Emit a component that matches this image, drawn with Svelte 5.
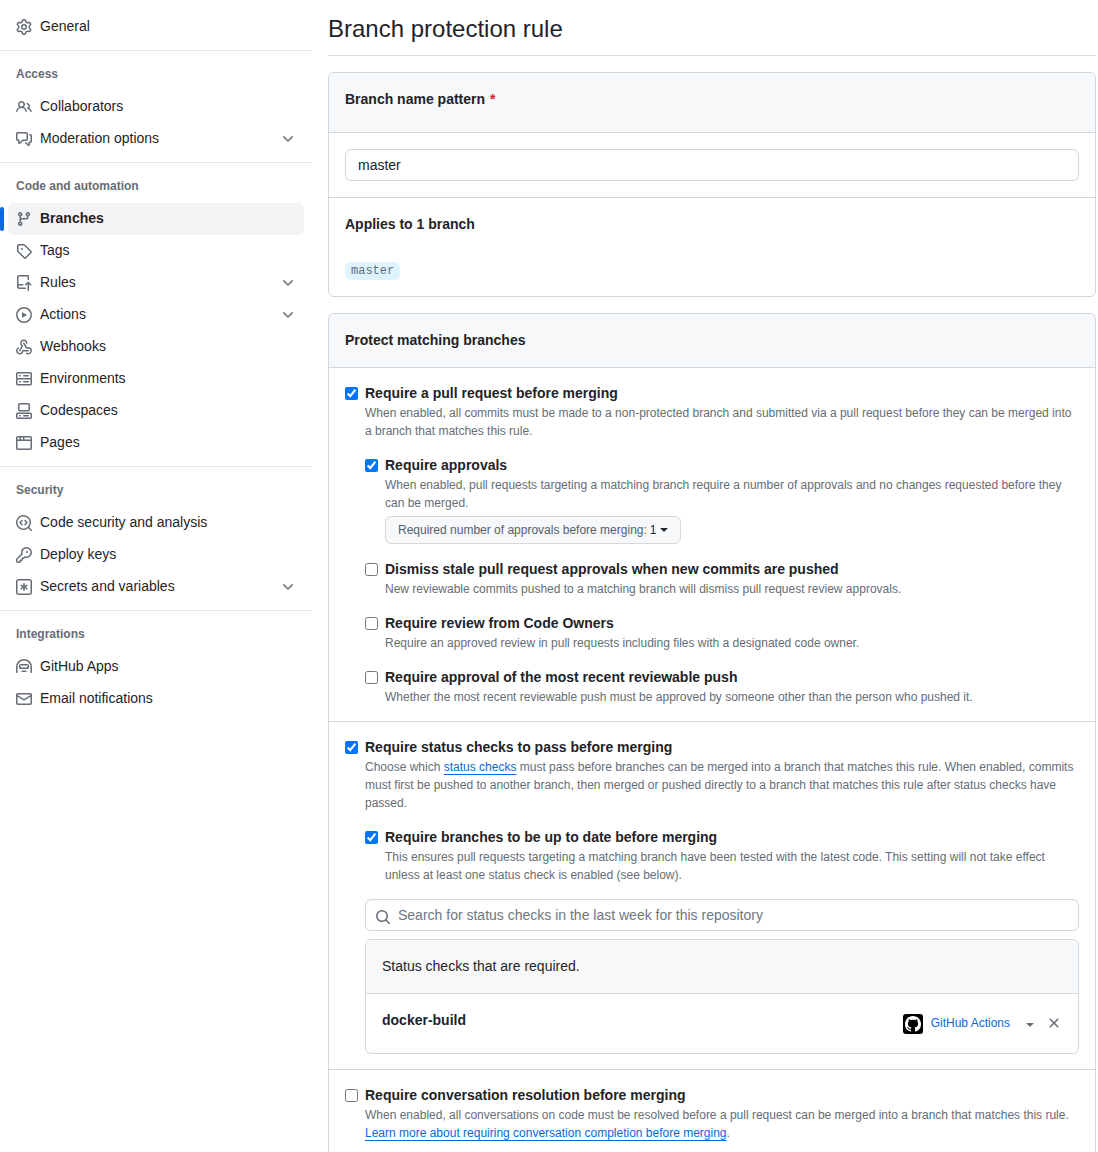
<script lang="ts">
	const icons: Record<string, string> = {
		gear: 'M8 0a8.2 8.2 0 0 1 .701.031C9.444.095 9.99.645 10.16 1.29l.288 1.107c.018.066.079.158.212.224.231.114.454.243.668.386.123.082.233.09.299.071l1.103-.303c.644-.176 1.392.021 1.82.63.27.385.506.792.704 1.218.315.675.111 1.422-.364 1.891l-.814.806c-.049.048-.098.147-.088.294.016.257.016.515 0 .772-.01.147.038.246.088.294l.814.806c.475.469.679 1.216.364 1.891a7.977 7.977 0 0 1-.704 1.217c-.428.61-1.176.807-1.82.63l-1.102-.302c-.067-.019-.177-.011-.3.071a5.909 5.909 0 0 1-.668.386c-.133.066-.194.158-.211.224l-.29 1.106c-.168.646-.715 1.196-1.458 1.26a8.006 8.006 0 0 1-1.402 0c-.743-.064-1.289-.614-1.458-1.26l-.289-1.106c-.018-.066-.079-.158-.212-.224a5.738 5.738 0 0 1-.668-.386c-.123-.082-.233-.09-.299-.071l-1.103.303c-.644.176-1.392-.021-1.82-.63a8.12 8.12 0 0 1-.704-1.218c-.315-.675-.111-1.422.363-1.891l.815-.806c.05-.048.098-.147.088-.294a6.214 6.214 0 0 1 0-.772c.01-.147-.038-.246-.088-.294l-.815-.806C.635 6.045.431 5.298.746 4.623a7.92 7.92 0 0 1 .704-1.217c.428-.61 1.176-.807 1.82-.63l1.102.302c.067.019.177.011.3-.071.214-.143.437-.272.668-.386.133-.066.194-.158.211-.224l.29-1.106C6.009.645 6.556.095 7.299.03 7.53.01 7.764 0 8 0Zm-.571 1.525c-.036.003-.108.036-.137.146l-.289 1.105c-.147.561-.549.967-.998 1.189-.173.086-.34.183-.5.29-.417.278-.97.423-1.529.27l-1.103-.303c-.109-.03-.175.016-.195.045-.22.312-.412.644-.573.99-.014.031-.021.11.059.19l.815.806c.411.406.562.957.53 1.456a4.709 4.709 0 0 0 0 .582c.032.499-.119 1.05-.53 1.456l-.815.806c-.081.08-.073.159-.059.19.162.346.353.677.573.989.02.03.085.076.195.046l1.102-.303c.56-.153 1.113-.008 1.53.27.161.107.328.204.501.29.447.222.85.629.997 1.189l.289 1.105c.029.109.101.143.137.146a6.6 6.6 0 0 0 1.142 0c.036-.003.108-.036.137-.146l.289-1.105c.147-.561.549-.967.998-1.189.173-.086.34-.183.5-.29.417-.278.97-.423 1.529-.27l1.103.303c.109.029.175-.016.195-.045.22-.313.411-.644.573-.99.014-.031.021-.11-.059-.19l-.815-.806c-.411-.406-.562-.957-.53-1.456a4.709 4.709 0 0 0 0-.582c-.032-.499.119-1.05.53-1.456l.815-.806c.081-.08.073-.159.059-.19a6.464 6.464 0 0 0-.573-.989c-.02-.03-.085-.076-.195-.046l-1.102.303c-.56.153-1.113.008-1.53-.27a4.44 4.44 0 0 0-.501-.29c-.447-.222-.85-.629-.997-1.189l-.289-1.105c-.029-.11-.101-.143-.137-.146a6.6 6.6 0 0 0-1.142 0ZM11 8a3 3 0 1 1-6 0 3 3 0 0 1 6 0ZM9.5 8a1.5 1.5 0 1 0-3.001.001A1.5 1.5 0 0 0 9.5 8Z',
		people: 'M2 5.5a3.5 3.5 0 1 1 5.898 2.549 5.508 5.508 0 0 1 3.034 4.084.75.75 0 1 1-1.482.235 4 4 0 0 0-7.9 0 .75.75 0 0 1-1.482-.236A5.507 5.507 0 0 1 3.102 8.05 3.493 3.493 0 0 1 2 5.5ZM11 4a3.001 3.001 0 0 1 2.22 5.018 5.01 5.01 0 0 1 2.56 3.012.749.749 0 0 1-.885.954.752.752 0 0 1-.549-.514 3.507 3.507 0 0 0-2.522-2.372.75.75 0 0 1-.574-.73v-.352a.75.75 0 0 1 .416-.672A1.5 1.5 0 0 0 11 5.5.75.75 0 0 1 11 4Zm-5.5-.5a2 2 0 1 0-.001 3.999A2 2 0 0 0 5.5 3.5Z',
		discussion: 'M1.75 1h8.5c.966 0 1.75.784 1.75 1.75v5.5A1.75 1.75 0 0 1 10.25 10H7.061l-2.574 2.573A1.458 1.458 0 0 1 2 11.543V10h-.25A1.75 1.75 0 0 1 0 8.25v-5.5C0 1.784.784 1 1.75 1ZM1.5 2.75v5.5c0 .138.112.25.25.25h1a.75.75 0 0 1 .75.75v2.19l2.72-2.72a.749.749 0 0 1 .53-.22h3.5a.25.25 0 0 0 .25-.25v-5.5a.25.25 0 0 0-.25-.25h-8.5a.25.25 0 0 0-.25.25Zm13 2a.25.25 0 0 0-.25-.25h-.5a.75.75 0 0 1 0-1.5h.5c.966 0 1.75.784 1.75 1.75v5.5A1.75 1.75 0 0 1 14.25 12H14v1.543a1.458 1.458 0 0 1-2.487 1.03L9.22 12.28a.749.749 0 0 1 .326-1.275.749.749 0 0 1 .734.215l2.22 2.22v-2.19a.75.75 0 0 1 .75-.75h1a.25.25 0 0 0 .25-.25Z',
		branch: 'M9.5 3.25a2.25 2.25 0 1 1 3 2.122V6A2.5 2.5 0 0 1 10 8.5H6a1 1 0 0 0-1 1v1.128a2.251 2.251 0 1 1-1.5 0V5.372a2.25 2.25 0 1 1 1.5 0v1.836A2.493 2.493 0 0 1 6 7h4a1 1 0 0 0 1-1v-.628A2.25 2.25 0 0 1 9.5 3.25Zm-6 0a.75.75 0 1 0 1.5 0 .75.75 0 0 0-1.5 0Zm8.25-.75a.75.75 0 1 0 0 1.5.75.75 0 0 0 0-1.5ZM4.25 12a.75.75 0 1 0 0 1.5.75.75 0 0 0 0-1.5Z',
		tag: 'M1 7.775V2.75C1 1.784 1.784 1 2.75 1h5.025c.464 0 .91.184 1.238.513l6.25 6.25a1.75 1.75 0 0 1 0 2.474l-5.026 5.026a1.75 1.75 0 0 1-2.474 0l-6.25-6.25A1.752 1.752 0 0 1 1 7.775Zm1.5 0c0 .066.026.13.073.177l6.25 6.25a.25.25 0 0 0 .354 0l5.025-5.025a.25.25 0 0 0 0-.354l-6.25-6.25a.25.25 0 0 0-.177-.073H2.75a.25.25 0 0 0-.25.25ZM6 5a1 1 0 1 1 0 2 1 1 0 0 1 0-2Z',
		push: 'M1 2.5A2.5 2.5 0 0 1 3.5 0h8.75a.75.75 0 0 1 .75.75v3.5a.75.75 0 0 1-1.5 0V1.5h-8a1 1 0 0 0-1 1v6.708A2.493 2.493 0 0 1 3.5 9h3.25a.75.75 0 0 1 0 1.5H3.5a1 1 0 0 0 0 2h5.75a.75.75 0 0 1 0 1.5H3.5A2.5 2.5 0 0 1 1 11.5Zm13.23 7.79h-.001l-1.224-1.224v6.184a.75.75 0 0 1-1.5 0V9.066L10.28 10.29a.75.75 0 0 1-1.06-1.061l2.505-2.504a.75.75 0 0 1 1.06 0L15.29 9.23a.751.751 0 0 1-.018 1.042.751.751 0 0 1-1.042.018Z',
		play: 'M8 0a8 8 0 1 1 0 16A8 8 0 0 1 8 0ZM1.5 8a6.5 6.5 0 1 0 13 0 6.5 6.5 0 0 0-13 0Zm4.879-2.773 4.264 2.559a.25.25 0 0 1 0 .428l-4.264 2.559A.25.25 0 0 1 6 10.559V5.442a.25.25 0 0 1 .379-.215Z',
		webhook: 'M5.5 4.25a2.25 2.25 0 0 1 4.5 0 .75.75 0 0 0 1.5 0 3.75 3.75 0 1 0-6.14 2.889l-2.272 4.258a.75.75 0 0 0 1.324.706L7 7.25a.75.75 0 0 0-.309-1.015A2.25 2.25 0 0 1 5.5 4.25ZM7.364 3.607a.75.75 0 0 1 1.03.257l2.608 4.349a3.75 3.75 0 1 1-.628 6.785.75.75 0 0 1 .752-1.299 2.25 2.25 0 1 0-.033-3.88.75.75 0 0 1-1.03-.256L7.107 4.636a.75.75 0 0 1 .257-1.03ZM2.9 8.776A.75.75 0 0 1 2.625 9.8 2.25 2.25 0 1 0 6 11.75a.75.75 0 0 1 .75-.751h5.5a.75.75 0 0 1 0 1.5H7.425a3.751 3.751 0 1 1-5.55-3.998.75.75 0 0 1 1.024.274Z',
		server: 'M1.75 1h12.5c.966 0 1.75.784 1.75 1.75v4c0 .372-.116.717-.314 1 .198.283.314.628.314 1v4a1.75 1.75 0 0 1-1.75 1.75H1.75A1.75 1.75 0 0 1 0 12.75v-4c0-.358.109-.707.314-1a1.739 1.739 0 0 1-.314-1v-4C0 1.784.784 1 1.75 1ZM1.5 2.75v4c0 .138.112.25.25.25h12.5a.25.25 0 0 0 .25-.25v-4a.25.25 0 0 0-.25-.25H1.75a.25.25 0 0 0-.25.25Zm.25 5.75a.25.25 0 0 0-.25.25v4c0 .138.112.25.25.25h12.5a.25.25 0 0 0 .25-.25v-4a.25.25 0 0 0-.25-.25ZM7 4.75A.75.75 0 0 1 7.75 4h4.5a.75.75 0 0 1 0 1.5h-4.5A.75.75 0 0 1 7 4.75ZM7.75 10h4.5a.75.75 0 0 1 0 1.5h-4.5a.75.75 0 0 1 0-1.5ZM3 4.75A.75.75 0 0 1 3.75 4h.5a.75.75 0 0 1 0 1.5h-.5A.75.75 0 0 1 3 4.75ZM3.75 10h.5a.75.75 0 0 1 0 1.5h-.5a.75.75 0 0 1 0-1.5Z',
		codespaces: 'M0 11.25c0-.966.784-1.75 1.75-1.75h12.5c.966 0 1.75.784 1.75 1.75v3A1.75 1.75 0 0 1 14.25 16H1.75A1.75 1.75 0 0 1 0 14.25Zm2-9.5C2 .784 2.784 0 3.75 0h8.5C13.216 0 14 .784 14 1.75v5a1.75 1.75 0 0 1-1.75 1.75h-8.5A1.75 1.75 0 0 1 2 6.75Zm1.75-.25a.25.25 0 0 0-.25.25v5c0 .138.112.25.25.25h8.5a.25.25 0 0 0 .25-.25v-5a.25.25 0 0 0-.25-.25Zm-2 9.5a.25.25 0 0 0-.25.25v3c0 .138.112.25.25.25h12.5a.25.25 0 0 0 .25-.25v-3a.25.25 0 0 0-.25-.25ZM7 12.75a.75.75 0 0 1 .75-.75h4.5a.75.75 0 0 1 0 1.5h-4.5a.75.75 0 0 1-.75-.75Zm-4 0a.75.75 0 0 1 .75-.75h.5a.75.75 0 0 1 0 1.5h-.5a.75.75 0 0 1-.75-.75Z',
		browser: 'M0 2.75C0 1.784.784 1 1.75 1h12.5c.966 0 1.75.784 1.75 1.75v10.5A1.75 1.75 0 0 1 14.25 15H1.75A1.75 1.75 0 0 1 0 13.25ZM14.5 6h-13v7.25c0 .138.112.25.25.25h12.5a.25.25 0 0 0 .25-.25Zm-6-3.5v2h6V2.75a.25.25 0 0 0-.25-.25ZM5 2.5v2h2v-2Zm-3.25 0a.25.25 0 0 0-.25.25V4.5h2v-2Z',
		codescan: 'M8.47 4.97a.75.75 0 0 0 0 1.06L9.94 7.5 8.47 8.97a.75.75 0 1 0 1.06 1.06l2-2a.75.75 0 0 0 0-1.06l-2-2a.75.75 0 0 0-1.06 0ZM6.53 6.03a.75.75 0 0 0-1.06-1.06l-2 2a.75.75 0 0 0 0 1.06l2 2a.75.75 0 1 0 1.06-1.06L5.06 7.5l1.47-1.47ZM12.246 13.307a7.501 7.501 0 1 1 1.06-1.06l2.474 2.473a.749.749 0 0 1-.326 1.275.749.749 0 0 1-.734-.215ZM1.5 7.5a6.002 6.002 0 0 0 3.608 5.504 6.002 6.002 0 0 0 6.486-1.117.748.748 0 0 1 .292-.293A6 6 0 1 0 1.5 7.5Z',
		key: 'M10.5 0a5.499 5.499 0 1 1-1.288 10.848l-.932.932a.749.749 0 0 1-.53.22H7v.75a.749.749 0 0 1-.22.53l-.5.5a.749.749 0 0 1-.53.22H5v.75a.749.749 0 0 1-.22.53l-.5.5a.749.749 0 0 1-.53.22h-2A1.75 1.75 0 0 1 0 14.25v-2c0-.199.079-.389.22-.53l4.932-4.932A5.5 5.5 0 0 1 10.5 0Zm-4 5.5c-.001.431.069.86.205 1.269a.75.75 0 0 1-.181.768L1.5 12.56v1.69c0 .138.112.25.25.25h1.69l.06-.06v-1.19a.75.75 0 0 1 .75-.75h1.19l.06-.06v-1.19a.75.75 0 0 1 .75-.75h1.19l1.023-1.025a.75.75 0 0 1 .768-.18A4 4 0 1 0 6.5 5.5ZM11 6a1 1 0 1 1 0-2 1 1 0 0 1 0 2Z',
		asterisk: 'M0 2.75A2.75 2.75 0 0 1 2.75 0h10.5A2.75 2.75 0 0 1 16 2.75v10.5A2.75 2.75 0 0 1 13.25 16H2.75A2.75 2.75 0 0 1 0 13.25ZM2.75 1.5c-.69 0-1.25.56-1.25 1.25v10.5c0 .69.56 1.25 1.25 1.25h10.5c.69 0 1.25-.56 1.25-1.25V2.75c0-.69-.56-1.25-1.25-1.25ZM8 4a.75.75 0 0 1 .75.75V6.7l1.69-.975a.75.75 0 0 1 .75 1.3L9.5 8l1.69.976a.75.75 0 0 1-.75 1.298L8.75 9.3v1.951a.75.75 0 0 1-1.5 0V9.299l-1.69.976a.75.75 0 0 1-.75-1.3L6.5 8l-1.69-.975a.75.75 0 0 1 .75-1.3l1.69.976V4.75A.75.75 0 0 1 8 4Z',
		hubot: 'M0 8a8 8 0 1 1 16 0v5.25a.75.75 0 0 1-1.5 0V8a6.5 6.5 0 1 0-13 0v5.25a.75.75 0 0 1-1.5 0Zm5.5 4.25a.75.75 0 0 1 .75-.75h3.5a.75.75 0 0 1 0 1.5h-3.5a.75.75 0 0 1-.75-.75ZM3 6.75C3 5.784 3.784 5 4.75 5h6.5c.966 0 1.75.784 1.75 1.75v1.5A1.75 1.75 0 0 1 11.25 10h-6.5A1.75 1.75 0 0 1 3 8.25Zm1.47-.53a.75.75 0 0 1 1.06 0l.97.97.97-.97a.75.75 0 0 1 1.06 0l.97.97.97-.97a.75.75 0 1 1 1.06 1.06l-1.5 1.5a.75.75 0 0 1-1.06 0L8 7.81l-.97.97a.75.75 0 0 1-1.06 0l-1.5-1.5a.75.75 0 0 1 0-1.06Z',
		mail: 'M1.75 2h12.5c.966 0 1.75.784 1.75 1.75v8.5A1.75 1.75 0 0 1 14.25 14H1.75A1.75 1.75 0 0 1 0 12.25v-8.5C0 2.784.784 2 1.75 2ZM1.5 12.251c0 .138.112.25.25.25h12.5a.25.25 0 0 0 .25-.25V5.809L8.38 9.397a.75.75 0 0 1-.76 0L1.5 5.809v6.442Zm13-8.181v-.32a.25.25 0 0 0-.25-.25H1.75a.25.25 0 0 0-.25.25v.32L8 7.88Z',
		chevron: 'M12.78 5.22a.749.749 0 0 1 0 1.06l-4.25 4.25a.749.749 0 0 1-1.06 0L3.22 6.28a.749.749 0 1 1 1.06-1.06L8 8.939l3.72-3.719a.749.749 0 0 1 1.06 0Z',
		search: 'M10.68 11.74a6 6 0 0 1-7.922-8.982 6 6 0 0 1 8.982 7.922l3.04 3.04a.749.749 0 0 1-.326 1.275.749.749 0 0 1-.734-.215ZM11.5 7a4.499 4.499 0 1 0-8.997 0A4.499 4.499 0 0 0 11.5 7Z',
		close: 'M3.72 3.72a.75.75 0 0 1 1.06 0L8 6.94l3.22-3.22a.749.749 0 0 1 1.275.326.749.749 0 0 1-.215.734L9.06 8l3.22 3.22a.749.749 0 0 1-.326 1.275.749.749 0 0 1-.734-.215L8 9.06l-3.22 3.22a.751.751 0 0 1-1.042-.018.751.751 0 0 1-.018-1.042L6.94 8 3.72 4.78a.75.75 0 0 1 0-1.06Z',
		triangle: 'm4.427 7.427 3.396 3.396a.25.25 0 0 0 .354 0l3.396-3.396A.25.25 0 0 0 11.396 7H4.604a.25.25 0 0 0-.177.427Z',
		mark: 'M8 0c4.42 0 8 3.58 8 8a8.013 8.013 0 0 1-5.45 7.59c-.4.08-.55-.17-.55-.38 0-.27.01-1.13.01-2.2 0-.75-.25-1.23-.54-1.48 1.78-.2 3.65-.88 3.65-3.95 0-.88-.31-1.59-.82-2.15.08-.2.36-1.02-.08-2.12 0 0-.67-.22-2.2.82-.64-.18-1.32-.27-2-.27-.68 0-1.36.09-2 .27-1.53-1.03-2.2-.82-2.2-.82-.44 1.1-.16 1.92-.08 2.12-.51.56-.82 1.28-.82 2.15 0 3.06 1.86 3.75 3.64 3.95-.23.2-.44.55-.51 1.07-.46.21-1.61.55-2.33-.66-.15-.24-.6-.83-1.23-.82-.67.01-.27.38.01.53.34.19.73.9.82 1.13.16.45.68 1.31 2.69.94 0 .67.01 1.3.01 1.49 0 .21-.15.45-.55.38A7.995 7.995 0 0 1 0 8c0-4.42 3.58-8 8-8Z'
	};

	type NavItem = { label: string; icon: string; expandable?: boolean };

	const groups: { title: string; items: NavItem[] }[] = [
		{ title: '', items: [{ label: 'General', icon: 'gear' }] },
		{
			title: 'Access',
			items: [
				{ label: 'Collaborators', icon: 'people' },
				{ label: 'Moderation options', icon: 'discussion', expandable: true }
			]
		},
		{
			title: 'Code and automation',
			items: [
				{ label: 'Branches', icon: 'branch' },
				{ label: 'Tags', icon: 'tag' },
				{ label: 'Rules', icon: 'push', expandable: true },
				{ label: 'Actions', icon: 'play', expandable: true },
				{ label: 'Webhooks', icon: 'webhook' },
				{ label: 'Environments', icon: 'server' },
				{ label: 'Codespaces', icon: 'codespaces' },
				{ label: 'Pages', icon: 'browser' }
			]
		},
		{
			title: 'Security',
			items: [
				{ label: 'Code security and analysis', icon: 'codescan' },
				{ label: 'Deploy keys', icon: 'key' },
				{ label: 'Secrets and variables', icon: 'asterisk', expandable: true }
			]
		},
		{
			title: 'Integrations',
			items: [
				{ label: 'GitHub Apps', icon: 'hubot' },
				{ label: 'Email notifications', icon: 'mail' }
			]
		}
	];

	let current = $state('Branches');
	let pattern = $state('master');
	let query = $state('');
	let checks = $state(['docker-build']);

	let rules = $state({
		pullRequest: true,
		approvals: true,
		dismissStale: false,
		codeOwners: false,
		recentPush: false,
		statusChecks: true,
		upToDate: true,
		conversation: false
	});

	function removeCheck(name: string) {
		checks = checks.filter((c) => c !== name);
	}
</script>

{#snippet icon(name: string)}
	<svg class="icon" viewBox="0 0 16 16" width="16" height="16" aria-hidden="true">
		<path fill-rule={name === 'hubot' ? 'evenodd' : 'nonzero'} d={icons[name]} />
	</svg>
{/snippet}

<div class="page">
	<nav class="sidebar" aria-label="Settings">
		{#each groups as group}
			<div class="group">
				{#if group.title}
					<h3>{group.title}</h3>
				{/if}
				<ul>
					{#each group.items as item}
						<li class:current={item.label === current}>
							{#if item.expandable}
								<button type="button" class="nav-item">
									{@render icon(item.icon)}
									<span>{item.label}</span>
									{@render icon('chevron')}
								</button>
							{:else}
								<a
									class="nav-item"
									href="#{item.icon}"
									aria-current={item.label === current ? 'page' : undefined}
									onclick={() => (current = item.label)}
								>
									{@render icon(item.icon)}
									<span>{item.label}</span>
								</a>
							{/if}
						</li>
					{/each}
				</ul>
			</div>
		{/each}
	</nav>

	<main>
		<h1>Branch protection rule</h1>

		<section class="box">
			<div class="box-header tall">
				<label for="pattern">Branch name pattern <span class="required">*</span></label>
			</div>
			<div class="box-row">
				<input id="pattern" class="field" type="text" bind:value={pattern} />
			</div>
			<div class="box-row applies">
				<h2>Applies to 1 branch</h2>
				<code>master</code>
			</div>
		</section>

		<section class="box rules">
			<div class="box-header">
				<h2>Protect matching branches</h2>
			</div>

			<div class="rule-row">
				<div class="check">
					<input id="pull-request" type="checkbox" bind:checked={rules.pullRequest} />
					<label for="pull-request">Require a pull request before merging</label>
					<p>When enabled, all commits must be made to a non-protected branch and submitted via a pull request before they can be merged into a branch that matches this rule.</p>
				</div>
				<div class="nested">
					<div class="check">
						<input id="approvals" type="checkbox" bind:checked={rules.approvals} />
						<label for="approvals">Require approvals</label>
						<p>When enabled, pull requests targeting a matching branch require a number of approvals and no changes requested before they can be merged.</p>
						<button type="button" class="menu-button" aria-haspopup="menu">
							<span>Required number of approvals before merging:</span> 1<i class="caret"></i>
						</button>
					</div>
					<div class="check">
						<input id="dismiss-stale" type="checkbox" bind:checked={rules.dismissStale} />
						<label for="dismiss-stale">Dismiss stale pull request approvals when new commits are pushed</label>
						<p>New reviewable commits pushed to a matching branch will dismiss pull request review approvals.</p>
					</div>
					<div class="check">
						<input id="code-owners" type="checkbox" bind:checked={rules.codeOwners} />
						<label for="code-owners">Require review from Code Owners</label>
						<p>Require an approved review in pull requests including files with a designated code owner.</p>
					</div>
					<div class="check">
						<input id="recent-push" type="checkbox" bind:checked={rules.recentPush} />
						<label for="recent-push">Require approval of the most recent reviewable push</label>
						<p>Whether the most recent reviewable push must be approved by someone other than the person who pushed it.</p>
					</div>
				</div>
			</div>

			<div class="rule-row">
				<div class="check">
					<input id="status-checks" type="checkbox" bind:checked={rules.statusChecks} />
					<label for="status-checks">Require status checks to pass before merging</label>
					<p>Choose which <a href="#status-checks">status checks</a> must pass before branches can be merged into a branch that matches this rule. When enabled, commits must first be pushed to another branch, then merged or pushed directly to a branch that matches this rule after status checks have passed.</p>
				</div>
				<div class="nested">
					<div class="check">
						<input id="up-to-date" type="checkbox" bind:checked={rules.upToDate} />
						<label for="up-to-date">Require branches to be up to date before merging</label>
						<p>This ensures pull requests targeting a matching branch have been tested with the latest code. This setting will not take effect unless at least one status check is enabled (see below).</p>
					</div>
					<div class="search">
						{@render icon('search')}
						<input
							class="field"
							type="text"
							aria-label="Search for status checks"
							placeholder="Search for status checks in the last week for this repository"
							bind:value={query}
						/>
					</div>
					<div class="box">
						<div class="box-header plain">Status checks that are required.</div>
						{#each checks as name}
							<div class="status-check">
								<strong>{name}</strong>
								<div class="source">
									<svg class="avatar" viewBox="0 0 20 20" width="20" height="20" aria-hidden="true">
										<rect width="20" height="20" rx="3" />
										<path transform="translate(2 2)" d={icons.mark} />
									</svg>
									<a href="#actions">GitHub Actions</a>
									<button type="button" aria-label="Select source">{@render icon('triangle')}</button>
									<button type="button" class="remove" aria-label="Remove {name}" onclick={() => removeCheck(name)}>
										{@render icon('close')}
									</button>
								</div>
							</div>
						{/each}
					</div>
				</div>
			</div>

			<div class="rule-row">
				<div class="check">
					<input id="conversation" type="checkbox" bind:checked={rules.conversation} />
					<label for="conversation">Require conversation resolution before merging</label>
					<p>When enabled, all conversations on code must be resolved before a pull request can be merged into a branch that matches this rule. <a href="#conversation">Learn more about requiring conversation completion before merging</a>.</p>
				</div>
			</div>
		</section>
	</main>
</div>

<style>
	:global(body) {
		margin: 0;
		background: #fff;
	}

	.page {
		display: grid;
		grid-template-columns: 312px minmax(0, 1fr);
		gap: 16px;
		min-height: 100vh;
		padding-right: 2px;
		box-sizing: border-box;
		font-family: 'Liberation Sans', Arial, sans-serif;
		font-size: 14px;
		line-height: 21px;
		color: #1f2328;
	}

	h1, h2, h3, p, ul {
		margin: 0;
		padding: 0;
	}

	button, input {
		font: inherit;
		color: inherit;
	}

	a {
		color: #0969da;
		text-decoration: none;
	}

	.icon {
		display: block;
		flex: none;
		fill: #656d76;
	}

	/* sidebar */
	.sidebar {
		padding-top: 11px;
	}

	.group + .group {
		margin-top: 7px;
		padding-top: 7px;
		border-top: 1px solid #e6e9ec;
	}

	.group h3 {
		padding: 7px 16px;
		font-size: 12px;
		line-height: 18px;
		color: #656d76;
	}

	.group + .group ul {
		padding-top: 1px;
	}

	.group ul {
		list-style: none;
	}

	li {
		position: relative;
		margin: 0 8px;
		border-radius: 6px;
	}

	li.current {
		background: #f3f4f6;
		font-weight: 600;
	}

	/* marker in the gutter beside the current page */
	li.current::before {
		content: '';
		position: absolute;
		top: 4px;
		left: -8px;
		width: 4px;
		height: 24px;
		border-radius: 6px;
		background: #0969da;
	}

	.nav-item {
		display: flex;
		gap: 8px;
		width: 100%;
		padding: 8px;
		box-sizing: border-box;
		border: 0;
		background: none;
		color: #1f2328;
		line-height: 16px;
		text-align: left;
		cursor: pointer;
	}

	.nav-item span {
		flex: 1;
		margin-top: -1px;
		margin-bottom: 1px;
	}

	/* main column */
	main {
		display: flex;
		flex-direction: column;
	}

	h1 {
		margin-bottom: 16px;
		padding: 11px 0 8px;
		border-bottom: 1px solid #d8dee4;
		font-size: 24px;
		font-weight: 400;
		line-height: 36px;
	}

	h2 {
		font-size: 14px;
		line-height: 21px;
	}

	.box {
		border: 1px solid #d0d7de;
		border-radius: 6px;
	}

	.box-header {
		padding: 16px;
		background: #f6f8fa;
		border-radius: 5px 5px 0 0;
		font-weight: 600;
	}

	.box-header.tall {
		padding-bottom: 22px;
	}

	.box-header.tall label {
		display: block;
	}

	.box-header.plain {
		font-weight: 400;
	}

	.required {
		margin-left: 1px;
		color: #d1242f;
	}

	.box-row {
		padding: 16px;
		border-top: 1px solid #d0d7de;
	}

	.field {
		display: block;
		width: 100%;
		height: 32px;
		padding: 0 12px;
		box-sizing: border-box;
		border: 1px solid #d0d7de;
		border-radius: 6px;
		background: #fff;
		line-height: 20px;
		box-shadow: inset 0 1px 0 rgba(208, 215, 222, 0.2);
	}

	.field::placeholder {
		color: #6e7781;
	}

	.applies {
		display: flex;
		flex-direction: column;
		align-items: flex-start;
		gap: 27px;
	}

	code {
		padding: 0 6px;
		border-radius: 6px;
		background: #ddf4ff;
		color: #656d76;
		font-family: 'Liberation Mono', monospace;
		font-size: 12px;
		line-height: 18px;
	}

	.rules {
		flex: 1;
		margin-top: 16px;
		border-bottom: 0;
		border-radius: 6px 6px 0 0;
	}

	.rule-row {
		padding: 16px 16px 15px;
		border-top: 1px solid #d0d7de;
	}

	.rule-row:last-child {
		padding-bottom: 0;
	}

	.check {
		display: grid;
		grid-template-columns: 13px minmax(0, 1fr);
		column-gap: 7px;
	}

	.check input {
		width: 13px;
		height: 13px;
		margin: 3px 0 0;
	}

	.check label {
		padding-bottom: 2px;
		font-weight: 600;
		line-height: 18px;
	}

	.check p {
		grid-column: 2;
		font-size: 12px;
		line-height: 18px;
		color: #656d76;
	}

	.check p a {
		text-decoration: underline;
		text-underline-offset: 3px;
	}

	.nested {
		padding-left: 20px;
	}

	.nested .check {
		margin-top: 16px;
	}

	.menu-button {
		grid-column: 2;
		justify-self: start;
		display: flex;
		align-items: center;
		gap: 3px;
		height: 28px;
		margin-top: 4px;
		padding: 0 12px;
		border: 1px solid #d5d8da;
		border-radius: 6px;
		background: #f6f8fa;
		color: #24292f;
		font-size: 12px;
		line-height: 18px;
		cursor: pointer;
	}

	.menu-button span {
		color: #57606a;
	}

	.caret {
		border: 4px solid transparent;
		border-top-color: currentColor;
		border-bottom: 0;
	}

	.search {
		position: relative;
		margin: 15px 0 8px;
	}

	.search .icon {
		position: absolute;
		top: 10px;
		left: 10px;
	}

	.search .field {
		padding-left: 32px;
	}

	.status-check {
		display: flex;
		justify-content: space-between;
		padding: 16px;
		border-top: 1px solid #d0d7de;
	}

	.source {
		display: flex;
		align-items: center;
		gap: 8px;
		height: 27px;
		font-size: 12px;
		line-height: 18px;
	}

	.source a,
	.source .remove {
		padding-bottom: 2px;
	}

	.source button {
		padding: 0;
		border: 0;
		background: none;
		cursor: pointer;
	}

	.source a + button {
		margin-left: 4px;
	}

	.avatar path {
		fill: #fff;
	}
</style>
